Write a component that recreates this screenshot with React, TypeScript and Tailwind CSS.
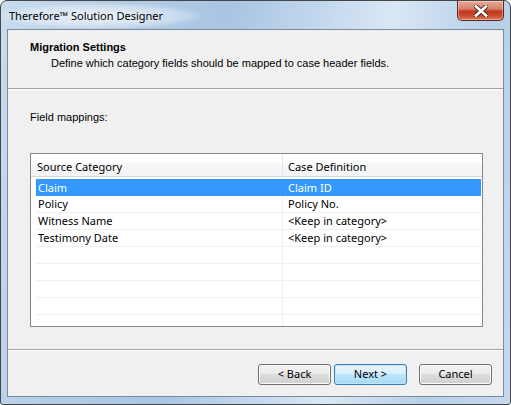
import React from "react";

const rows: [string, string][] = [
  ["Claim", "Claim ID"],
  ["Policy", "Policy No."],
  ["Witness Name", "<Keep in category>"],
  ["Testimony Date", "<Keep in category>"],
  ["", ""],
  ["", ""],
  ["", ""],
  ["", ""],
  ["", ""],
];

const ui = "font-['Segoe_UI','Noto_Sans','Liberation_Sans',sans-serif]";
const tahoma = "font-['Tahoma','Liberation_Sans','DejaVu_Sans',sans-serif]";

function CloseButton() {
  return (
    <div className="absolute right-[6px] top-0 w-[47px] h-[20px] rounded-b-[5px] border border-t-0 border-[#5a2a20] bg-[linear-gradient(to_bottom,#e9a99a_0%,#d9826d_40%,#c0391f_55%,#c9482c_75%,#e07a5e_100%)] shadow-[inset_0_0_0_1px_rgba(255,255,255,0.35)] flex items-center justify-center">
      <svg width="14" height="12" viewBox="0 0 14 12">
        <path
          d="M2 1.5 L12 10.5 M12 1.5 L2 10.5"
          stroke="#4a2418"
          strokeWidth="4.6"
          strokeLinecap="square"
        />
        <path
          d="M2 1.5 L12 10.5 M12 1.5 L2 10.5"
          stroke="#ffffff"
          strokeWidth="2.8"
          strokeLinecap="square"
        />
      </svg>
    </div>
  );
}

function WinButton({ label, primary }: { label: string; primary?: boolean }) {
  return (
    <button
      className={
        "w-[73px] h-[21px] rounded-[3px] border text-[11px] text-black flex items-center justify-center " +
        ui +
        " " +
        (primary
          ? "border-[#3c7fb1] bg-[linear-gradient(to_bottom,#eaf6fd_0%,#d9f0fc_45%,#bee6fd_50%,#a7d9f5_100%)] shadow-[inset_0_0_0_1px_#c4e5f6]"
          : "border-[#707070] bg-[linear-gradient(to_bottom,#f2f2f2_0%,#ebebeb_45%,#dddddd_50%,#cfcfcf_100%)] shadow-[inset_0_0_0_1px_#fcfcfc]")
      }
    >
      {label}
    </button>
  );
}

export default function App() {
  return (
    <div className="w-[511px] h-[405px] bg-white">
      <div className="relative w-[511px] h-[405px] rounded-t-[7px] rounded-b-[3px] border border-[#464646] bg-[linear-gradient(100deg,#c9dcef_0%,#b3cce6_20%,#a9c5e3_40%,#c2d7ed_55%,#d9e7f5_68%,#b6cfe8_85%,#c5d9ee_100%)] flex flex-col px-[6px] pb-[7px]">
        {/* title bar */}
        <div className="h-[28px] shrink-0 flex items-center relative">
          <div className="absolute left-[-6px] top-[2px] w-[200px] h-[26px] bg-[radial-gradient(ellipse_at_center,rgba(255,255,255,0.75)_0%,rgba(255,255,255,0.35)_55%,transparent_75%)]" />
          <span className={"relative pl-[2px] text-[11px] text-black pt-[2px] " + ui}>
            Therefore™ Solution Designer
          </span>
        </div>
        <CloseButton />

        {/* client */}
        <div className="flex-1 border border-[#7b8b9c] bg-[#f0f0f0] flex flex-col">
          {/* header */}
          <div className={"h-[58px] shrink-0 pl-[22px] pt-[10px] text-[11px] text-black " + tahoma}>
            <div className="font-bold leading-[14px]">Migration Settings</div>
            <div className="pl-[21px] pt-[2px] leading-[14px]">
              Define which category fields should be mapped to case header fields.
            </div>
          </div>
          <div className="h-px shrink-0 bg-[#a0a0a0]" />
          <div className="h-px shrink-0 bg-white" />

          {/* body */}
          <div className="flex-1 flex flex-col px-[22px]">
            <div className={"pt-[20px] h-[63px] shrink-0 text-[11px] text-black leading-[14px] " + tahoma}>
              Field mappings:
            </div>
            <div className={"w-[453px] h-[174px] shrink-0 overflow-hidden border border-[#828790] bg-white flex flex-col text-[11px] text-black " + ui}>
              <div className="h-[23px] shrink-0 flex bg-[linear-gradient(to_bottom,#ffffff_0%,#ffffff_40%,#f7f8fa_41%,#f3f4f6_100%)] border-b border-[#d5d5d5]">
                <div className="w-[252px] pl-[6px] pt-[5px] border-r border-[#e3e5e8] leading-[16px]">
                  Source Category
                </div>
                <div className="flex-1 pl-[5px] pt-[5px] leading-[16px]">Case Definition</div>
              </div>
              <div className="h-[2px] shrink-0" />
              <div className="flex flex-col pl-[5px] pr-px shrink-0">
                {rows.map(([a, b], i) => (
                  <div
                    key={i}
                    className={
                      "h-[17px] shrink-0 flex " +
                      (i === 0 ? "bg-[#3399ff] text-white" : "border-b border-[#f0f0f0]")
                    }
                  >
                    <div
                      className={
                        "w-[247px] pl-[2px] flex items-center leading-[16px] " +
                        (i === 0 ? "" : "border-r border-[#f0f0f0]")
                      }
                    >
                      {a}
                    </div>
                    <div className="flex-1 pl-[5px] flex items-center leading-[16px]">{b}</div>
                  </div>
                ))}
              </div>
            </div>
          </div>

          {/* footer */}
          <div className="h-px shrink-0 bg-[#a0a0a0]" />
          <div className="h-px shrink-0 bg-white" />
          <div className="h-[45px] shrink-0 flex items-start justify-end pt-[13px] pr-[11px]">
            <div className="flex">
              <WinButton label="< Back" />
              <div className="w-[3px]" />
              <WinButton label="Next >" primary />
              <div className="w-[12px]" />
              <WinButton label="Cancel" />
            </div>
          </div>
        </div>
      </div>
    </div>
  );
}
